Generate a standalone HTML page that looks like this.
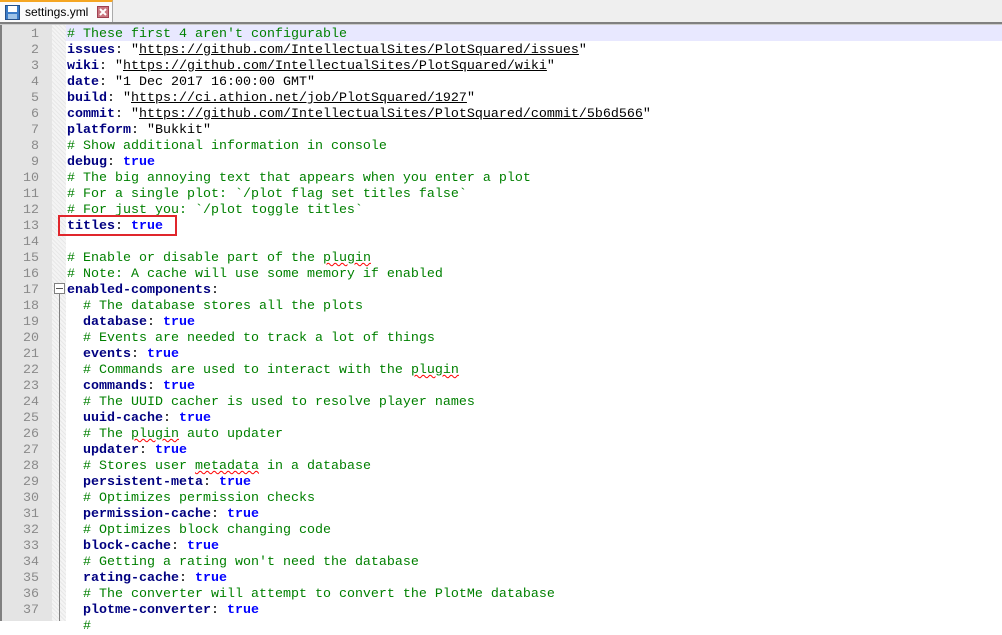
<!DOCTYPE html>
<html><head><meta charset="utf-8"><style>
*{margin:0;padding:0;box-sizing:border-box}
body{width:1002px;height:621px;overflow:hidden;background:#fff;position:relative;font-family:"Liberation Mono",monospace}
#tabbar{position:absolute;left:0;top:0;width:1002px;height:22px;background:#efefef}
#tab{position:absolute;left:0;top:0;width:113px;height:23px;background:#fbfbfb;border-top:2px solid #f5a623;border-right:1px solid #aaa}
#tab .t{position:absolute;left:25px;top:3px;font:12px "Liberation Sans",sans-serif;color:#000}
#sep{position:absolute;left:0;top:22px;width:1002px;height:3px;background:#808080;border-bottom:1px solid #ccc}
#gut{position:absolute;left:0;top:25px;width:52px;height:596px;background:#e4e4e4;border-left:2px solid #808080}
#fold{position:absolute;left:52px;top:25px;width:14px;height:596px;background-color:#f4f4f4;background-image:repeating-linear-gradient(45deg,#e8e8e8 0 1px,transparent 1px 3px)}
#hl{position:absolute;left:66px;top:25px;width:936px;height:16px;background:#e8e8ff}
.ln{position:absolute;left:0;width:39px;text-align:right;color:#8a8a8a;font-size:13.33px;line-height:16px}
.cd{position:absolute;left:67px;font-size:13.33px;line-height:16px;white-space:pre;color:#000}
.k{color:#000080;font-weight:bold}
.v{color:#0000ff;font-weight:bold}
.c{color:#008000}
.u{text-decoration:underline}
.sq{text-decoration:underline wavy red;text-decoration-thickness:1px}
#box{position:absolute;left:58px;top:215px;width:119px;height:21px;border:2px solid #e0262c}
</style></head><body>
<div id="tabbar"></div>
<div id="tab">
<svg style="position:absolute;left:5px;top:3px" width="15" height="15" viewBox="0 0 15 15"><rect x="0.5" y="0.5" width="14" height="14" fill="#3a7bc8" stroke="#25508a"/><rect x="3" y="1" width="9" height="6" fill="#fff"/><rect x="3" y="9" width="9" height="5" fill="#9ec3e8"/></svg>
<span class="t">settings.yml</span>
<svg style="position:absolute;left:97px;top:4px" width="12" height="12" viewBox="0 0 12 12"><rect x="0.5" y="0.5" width="11" height="11" fill="#c9757f" stroke="#a04050"/><path d="M3 3L9 9M9 3L3 9" stroke="#fff" stroke-width="2"/></svg>
</div>
<div id="sep"></div>
<div id="gut"></div>
<div id="fold"></div>
<div style="position:absolute;left:54px;top:283px;width:11px;height:11px;border:1px solid #808080;background:#fff"></div>
<div style="position:absolute;left:56px;top:288px;width:7px;height:1px;background:#555"></div>
<div style="position:absolute;left:59px;top:294px;width:1px;height:327px;background:#808080"></div>
<div id="hl"></div>
<div id="lines"></div>
<div id="box"></div>
<script>
var L=[
'<span class="c"># These first 4 aren\'t configurable</span>',
'<span class="k">issues</span>: "<span class="u">https://github.com/IntellectualSites/PlotSquared/issues</span>"',
'<span class="k">wiki</span>: "<span class="u">https://github.com/IntellectualSites/PlotSquared/wiki</span>"',
'<span class="k">date</span>: "1 Dec 2017 16:00:00 GMT"',
'<span class="k">build</span>: "<span class="u">https://ci.athion.net/job/PlotSquared/1927</span>"',
'<span class="k">commit</span>: "<span class="u">https://github.com/IntellectualSites/PlotSquared/commit/5b6d566</span>"',
'<span class="k">platform</span>: "Bukkit"',
'<span class="c"># Show additional information in console</span>',
'<span class="k">debug</span>: <span class="v">true</span>',
'<span class="c"># The big annoying text that appears when you enter a plot</span>',
'<span class="c"># For a single plot: `/plot flag set titles false`</span>',
'<span class="c"># For just you: `/plot toggle titles`</span>',
'<span class="k">titles</span>: <span class="v">true</span>',
'',
'<span class="c"># Enable or disable part of the <span class="sq">plugin</span></span>',
'<span class="c"># Note: A cache will use some memory if enabled</span>',
'<span class="k">enabled-components</span>:',
'  <span class="c"># The database stores all the plots</span>',
'  <span class="k">database</span>: <span class="v">true</span>',
'  <span class="c"># Events are needed to track a lot of things</span>',
'  <span class="k">events</span>: <span class="v">true</span>',
'  <span class="c"># Commands are used to interact with the <span class="sq">plugin</span></span>',
'  <span class="k">commands</span>: <span class="v">true</span>',
'  <span class="c"># The UUID cacher is used to resolve player names</span>',
'  <span class="k">uuid-cache</span>: <span class="v">true</span>',
'  <span class="c"># The <span class="sq">plugin</span> auto updater</span>',
'  <span class="k">updater</span>: <span class="v">true</span>',
'  <span class="c"># Stores user <span class="sq">metadata</span> in a database</span>',
'  <span class="k">persistent-meta</span>: <span class="v">true</span>',
'  <span class="c"># Optimizes permission checks</span>',
'  <span class="k">permission-cache</span>: <span class="v">true</span>',
'  <span class="c"># Optimizes block changing code</span>',
'  <span class="k">block-cache</span>: <span class="v">true</span>',
'  <span class="c"># Getting a rating won\'t need the database</span>',
'  <span class="k">rating-cache</span>: <span class="v">true</span>',
'  <span class="c"># The converter will attempt to convert the PlotMe database</span>',
'  <span class="k">plotme-converter</span>: <span class="v">true</span>',
'  <span class="c">#</span>'];
var h='';for(var i=0;i<L.length;i++){var t=27+16*i;h+='<div class="ln" style="top:'+t+'px">'+(i<37?i+1:'')+'</div><div class="cd" style="top:'+t+'px">'+L[i]+'</div>';}
document.getElementById('lines').innerHTML=h;
</script>
</body></html>
